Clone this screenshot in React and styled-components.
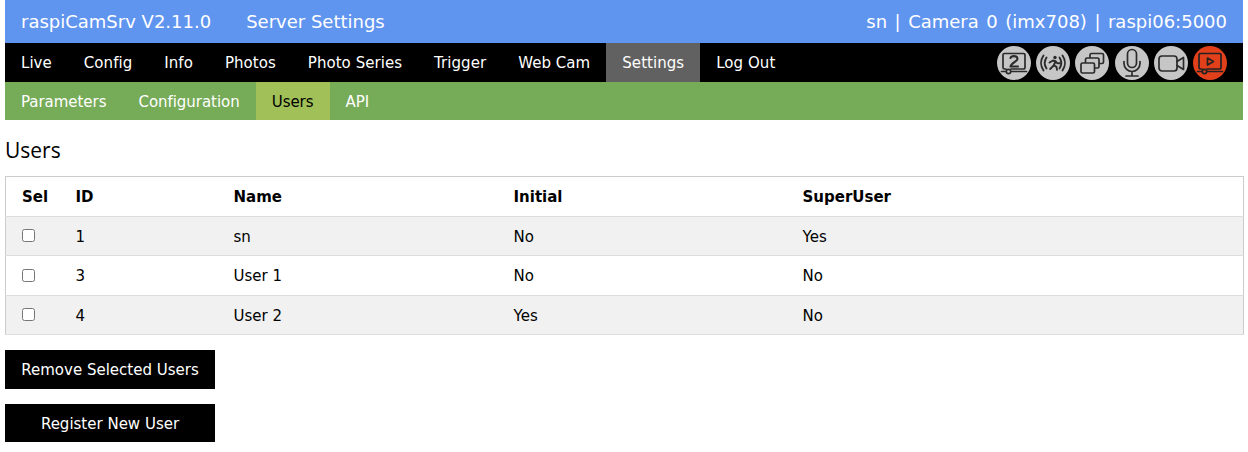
import React from "react";
import styled, {createGlobalStyle} from "styled-components";

const GlobalStyle = createGlobalStyle`
html, body {
  margin: 0;
  padding: 0;
  background: white;
}
body {
  padding: 0 5px;
  font-family: "DejaVu Sans", Verdana, sans-serif;
  font-size: 15px;
  color: #000;
}
`;

const TopBar = styled.header`
display: flex;
justify-content: space-between;
align-items: center;
height: 43px;
padding: 0 16px;
background-color: #5f94ef;
color: white;
font-size: 18px;
`;
const Title = styled.div`
display: flex;
gap: 35px;
`;
const Status = styled.span`
word-spacing: 1.8px;
`;
const MainNav = styled.nav`
display: flex;
justify-content: space-between;
align-items: center;
height: 39px;
padding-right: 16px;
background-color: black;
letter-spacing: 0.05px;
`;
const SubNav = styled.nav`
display: flex;
height: 38px;
background-color: #76ab57;
letter-spacing: -0.04px;
`;
const Links = styled.div`
display: flex;
height: 100%;
`;
const NavLink = styled.a`
display: flex;
align-items: center;
padding: ${p => p.$sub ? "2px 16px 0" : "0 16px"};
color: ${p => p.$active && p.$sub ? "black" : "white"};
background-color: ${p => !p.$active ? "transparent" : p.$sub ? "#a1c058" : "#616161"};
`;
const Icons = styled.div`
display: flex;
gap: 5.2px;
`;
const IconSvg = styled.svg`
display: block;
width: 34px;
height: 34px;
`;
const Heading = styled.h2`
margin: 0;
padding: 16px 0 11px;
font-family: "Open Sans", sans-serif;
font-size: 21px;
line-height: 29px;
font-weight: 400;
`;
const Table = styled.table`
width: 100%;
border-collapse: collapse;
border: 1px solid #ccc;
table-layout: fixed;
`;
const Col = styled.col`
width: ${p => p.$width}px;
`;
const Row = styled.tr`
height: 39.5px;
border-bottom: 1px solid #ddd;
background-color: ${p => p.$odd ? "#f1f1f1" : "white"};
`;
const Head = styled.th`
padding: 2px 0 0 16px;
text-align: left;
font-weight: bold;
`;
const Cell = styled.td`
padding: 2px 0 0 16px;
`;
const Check = styled.input`
display: block;
width: 13px;
height: 13px;
margin: 0 0 2px;
`;
const Actions = styled.div`
display: flex;
flex-direction: column;
gap: 15px;
margin-top: 15px;
`;
const Button = styled.button`
width: 210px;
height: 38.6px;
padding: 2px 0 0;
border: none;
background-color: black;
color: white;
font: inherit;
`;

const mainLinks = ["Live", "Config", "Info", "Photos", "Photo Series", "Trigger", "Web Cam", "Settings", "Log Out"];
const subLinks = ["Parameters", "Configuration", "Users", "API"];
const users = [
  {id: 1, name: "sn", initial: "No", superUser: "Yes"},
  {id: 3, name: "User 1", initial: "No", superUser: "No"},
  {id: 4, name: "User 2", initial: "Yes", superUser: "No"},
];
const widths = [54, 158, 280, 289, 457];

const Badge = ({fill = "#c6c6c6", stroke = "#2b2b2b", children}) => (
  <IconSvg viewBox="0 0 34 34" fill="none" stroke={stroke} strokeWidth="1.7" strokeLinecap="round" strokeLinejoin="round">
    <circle cx="17" cy="17" r="17" fill={fill} stroke="none"/>
    {children}
  </IconSvg>
);

const Stream = ({label}) => (
  <>
    <path d="M9 23H7.500A1.500 1.500 0 0 1 6 21.500V9A1.500 1.500 0 0 1 7.500 7.500h19A1.500 1.500 0 0 1 28 9v12.500a1.500 1.500 0 0 1-1.500 1.500H14"/>
    <path d="M4.500 25.500h4.500M14.500 25.500H29.500"/>
    <circle cx="11.500" cy="25.500" r="2.200"/>
    {label}
  </>
);

const App = () => (
  <>
    <GlobalStyle/>
    <TopBar>
      <Title><span>raspiCamSrv V2.11.0</span><span>Server Settings</span></Title>
      <Status>sn | Camera 0 (imx708) | raspi06:5000</Status>
    </TopBar>
    <MainNav>
      <Links>
        {mainLinks.map(l => <NavLink key={l} $active={l === "Settings"}>{l}</NavLink>)}
      </Links>
      <Icons>
        <Badge>
          <Stream label={<path d="M13.500 12c.8-2.600 7-2.600 7 .8 0 2.600-6.500 4-7 7.700h7.500" strokeWidth="2.100"/>}/>
        </Badge>
        <Badge>
          <path d="M7.500 9.500c-3.200 4.500-3.200 10.500 0 15M10.500 11.500c-2.200 3.300-2.200 7.700 0 11M26.500 9.500c3.200 4.500 3.200 10.500 0 15M23.500 11.500c2.200 3.300 2.200 7.700 0 11" strokeWidth="1.900"/>
          <circle cx="19" cy="11.500" r="1.700" fill="#2b2b2b" stroke="none"/>
          <path d="M13.500 16.500l3.500-2 2.500 1-1.800 4-3.500 3.500M17.800 19.300l2.700 1.500.5 3M19.500 15l1.700 2.300h2.800" strokeWidth="1.900"/>
        </Badge>
        <Badge>
          <rect x="15" y="7.500" width="13.500" height="10" rx="1.500"/>
          <rect x="10.500" y="12" width="13.500" height="10" rx="1.500" fill="#c6c6c6"/>
          <rect x="6" y="17" width="13.500" height="10" rx="1.500" fill="#c6c6c6"/>
        </Badge>
        <Badge>
          <rect x="12.500" y="3.500" width="9" height="18" rx="4.500"/>
          <path d="M9 15.500v2a8 8 0 0 0 16 0v-2M17 25.500V29.500M11 30h12"/>
        </Badge>
        <Badge>
          <rect x="5" y="10" width="18" height="15" rx="3"/>
          <path d="M23 15.500l6.500-4v12l-6.500-4"/>
        </Badge>
        <Badge fill="#e2401b" stroke="#222">
          <Stream label={<path d="M14.500 12l6 3.500-6 3.500z"/>}/>
        </Badge>
      </Icons>
    </MainNav>
    <SubNav>
      {subLinks.map(l => <NavLink key={l} $sub $active={l === "Users"}>{l}</NavLink>)}
    </SubNav>
    <Heading>Users</Heading>
    <Table>
      <colgroup>{widths.map((w, i) => <Col key={i} $width={w}/>)}</colgroup>
      <thead>
        <Row>
          <Head>Sel</Head>
          <Head>ID</Head>
          <Head>Name</Head>
          <Head>Initial</Head>
          <Head>SuperUser</Head>
        </Row>
      </thead>
      <tbody>
        {users.map((u, i) => (
          <Row key={u.id} $odd={i % 2 === 0}>
            <Cell><Check type="checkbox"/></Cell>
            <Cell>{u.id}</Cell>
            <Cell>{u.name}</Cell>
            <Cell>{u.initial}</Cell>
            <Cell>{u.superUser}</Cell>
          </Row>
        ))}
      </tbody>
    </Table>
    <Actions>
      <Button>Remove Selected Users</Button>
      <Button>Register New User</Button>
    </Actions>
  </>
);

export default App;
